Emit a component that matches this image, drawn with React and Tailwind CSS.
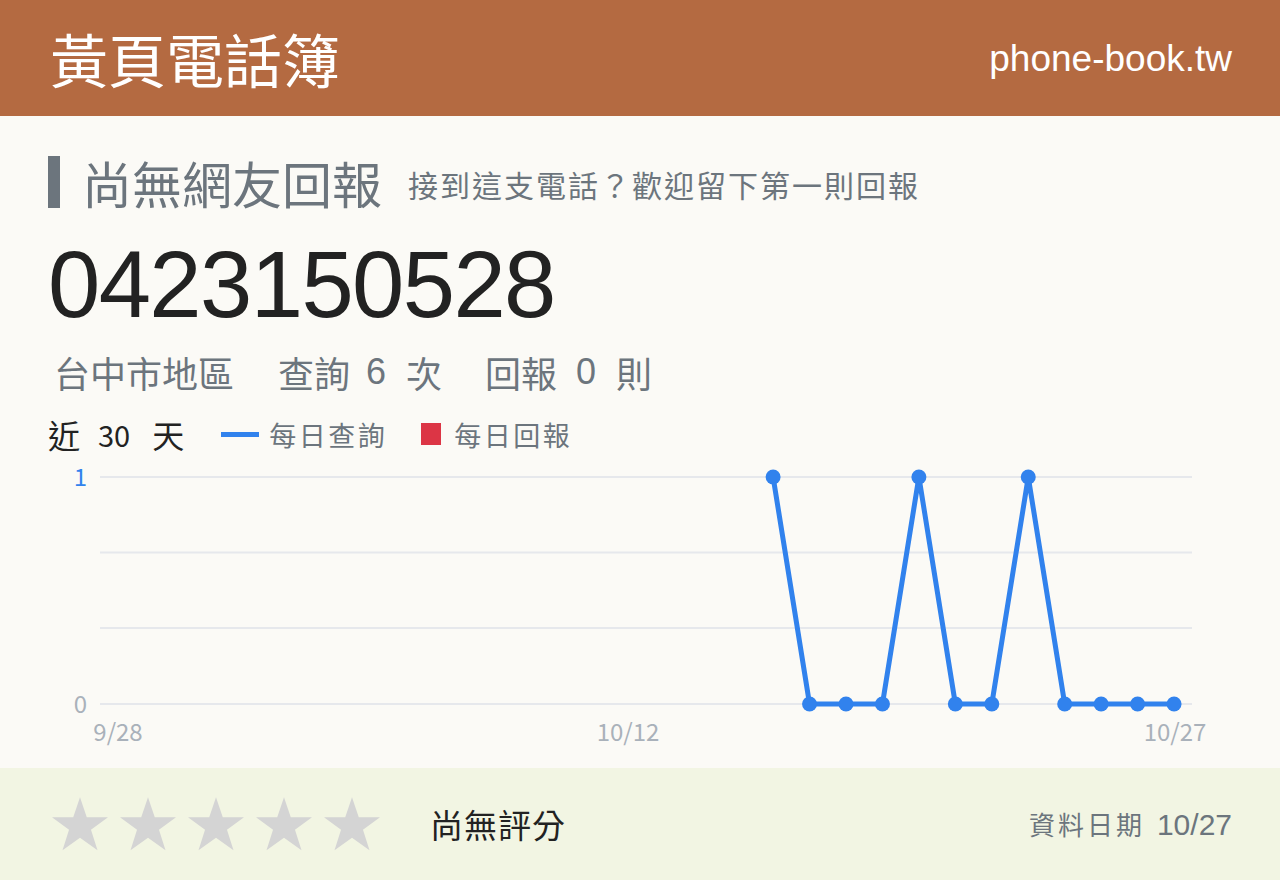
import React from 'react';

const CJK = '"Noto Sans CJK TC", "Liberation Sans", sans-serif';
const LATIN = '"Liberation Sans", "Noto Sans CJK TC", sans-serif';

// daily lookups for the last 30 days (null = no data yet)
const daily = [
  null, null, null, null, null, null, null, null, null, null,
  null, null, null, null, null, null, null, null, 1, 0,
  0, 0, 1, 0, 0, 1, 0, 0, 0, 0,
];

const X0 = 117;
const STEP = 36.45;
const Y1 = 476;
const Y0 = 703;

const Chart = () => {
  const pts = daily
    .map((v, i) => (v === null ? null : [X0 + i * STEP, v ? Y1 : Y0]))
    .filter(Boolean);
  return (
    <svg width="1280" height="306" viewBox="0 450 1280 306" className="block">
      {[476, 551.5, 627, 703].map((y) => (
        <line key={y} x1="100" x2="1192" y1={y} y2={y} stroke="#e6e8ec" strokeWidth="2" />
      ))}
      <text x="87" y="485" textAnchor="end" fontSize="24" fill="#3182ed" style={{ fontFamily: CJK }}>1</text>
      <text x="87" y="712" textAnchor="end" fontSize="24" fill="#a9b1ba" style={{ fontFamily: CJK }}>0</text>
      <text x="118" y="740" textAnchor="middle" fontSize="24" fill="#a9b1ba" style={{ fontFamily: CJK }}>9/28</text>
      <text x="628" y="740" textAnchor="middle" fontSize="24" fill="#a9b1ba" style={{ fontFamily: CJK }}>10/12</text>
      <text x="1175" y="740" textAnchor="middle" fontSize="24" fill="#a9b1ba" style={{ fontFamily: CJK }}>10/27</text>
      <polyline
        points={pts.map((p) => p.join(',')).join(' ')}
        fill="none"
        stroke="#3182ed"
        strokeWidth="5"
        strokeLinejoin="round"
      />
      {pts.map(([x, y]) => (
        <circle key={x} cx={x} cy={y} r="7.5" fill="#3182ed" />
      ))}
    </svg>
  );
};

const Star = () => (
  <svg width="56" height="54" viewBox="0 0 24 23">
    <path d="M12 0l2.9 8.6H24l-7.3 5.4 2.8 8.8L12 17.4l-7.5 5.4 2.8-8.8L0 8.6h9.1z" fill="#d4d4d4" />
  </svg>
);

const Num = ({ children, left = 16 }) => (
  <span
    className={`${left === 16 ? 'ml-[16px]' : 'ml-[19px]'} mr-[20px] w-[20px] text-center`}
    style={{ fontFamily: LATIN }}
  >
    {children}
  </span>
);

export default function App() {
  return (
    <div className="flex h-[880px] w-[1280px] flex-col bg-[#fbfaf6]" style={{ fontFamily: CJK }}>
      <header className="flex h-[116px] shrink-0 items-center justify-between bg-[#b46a41] pl-[50px] pr-[48px] text-white">
        <div className="text-[58px] leading-none">黃頁電話簿</div>
        <div className="text-[37px] leading-none" style={{ fontFamily: LATIN }}>phone-book.tw</div>
      </header>

      <main className="px-[48px] pt-[40px]">
        <div className="flex items-center">
          <div className="h-[52px] w-[12px] bg-[#6c757d]" />
          <h1 className="ml-[22px] text-[50px] leading-none text-[#6c757d]">尚無網友回報</h1>
          <p className="ml-[26px] mt-[4px] text-[30px] leading-none tracking-[2px] text-[#6c757d]">接到這支電話？歡迎留下第一則回報</p>
        </div>

        <div className="mt-[30px] text-[94px] leading-none tracking-[-1.6px] text-[#222]" style={{ fontFamily: LATIN }}>0423150528</div>

        <div className="mt-[22px] flex pl-[6px] text-[36px] leading-none text-[#6c757d]">
          <span>台中市地區</span>
          <span className="ml-[44px] flex">
            查詢<Num>6</Num>次
          </span>
          <span className="ml-[43px] flex">
            回報<Num left={19}>0</Num>則
          </span>
        </div>

        <div className="mt-[27px] flex h-[34px] items-center leading-none">
          <span className="flex items-center text-[32px] text-[#222]">
            近<span className="ml-[18px] mr-[22px] text-[29px]">30</span>天
          </span>
          <span className="ml-[37px] h-[5px] w-[38px] bg-[#3182ed]" />
          <span className="ml-[10px] text-[27px] tracking-[2.5px] text-[#6c757d]">每日查詢</span>
          <span className="ml-[34px] h-[22px] w-[20px] bg-[#dc3545]" />
          <span className="ml-[13px] text-[27px] tracking-[2.5px] text-[#6c757d]">每日回報</span>
        </div>
      </main>

      <div className="flex-1">
        <Chart />
      </div>

      <footer className="flex h-[112px] shrink-0 items-center bg-[#f2f5e3] pl-[52px] pr-[48px]">
        <div className="flex gap-[12px]">
          {[0, 1, 2, 3, 4].map((i) => (
            <Star key={i} />
          ))}
        </div>
        <div className="ml-[50px] text-[33px] leading-none tracking-[1px] text-[#222]">尚無評分</div>
        <div className="ml-auto flex items-baseline text-[#6c757d]">
          <span className="text-[26px] tracking-[3px]">資料日期</span>
          <span className="ml-[12px] text-[30px]" style={{ fontFamily: LATIN }}>10/27</span>
        </div>
      </footer>
    </div>
  );
}
